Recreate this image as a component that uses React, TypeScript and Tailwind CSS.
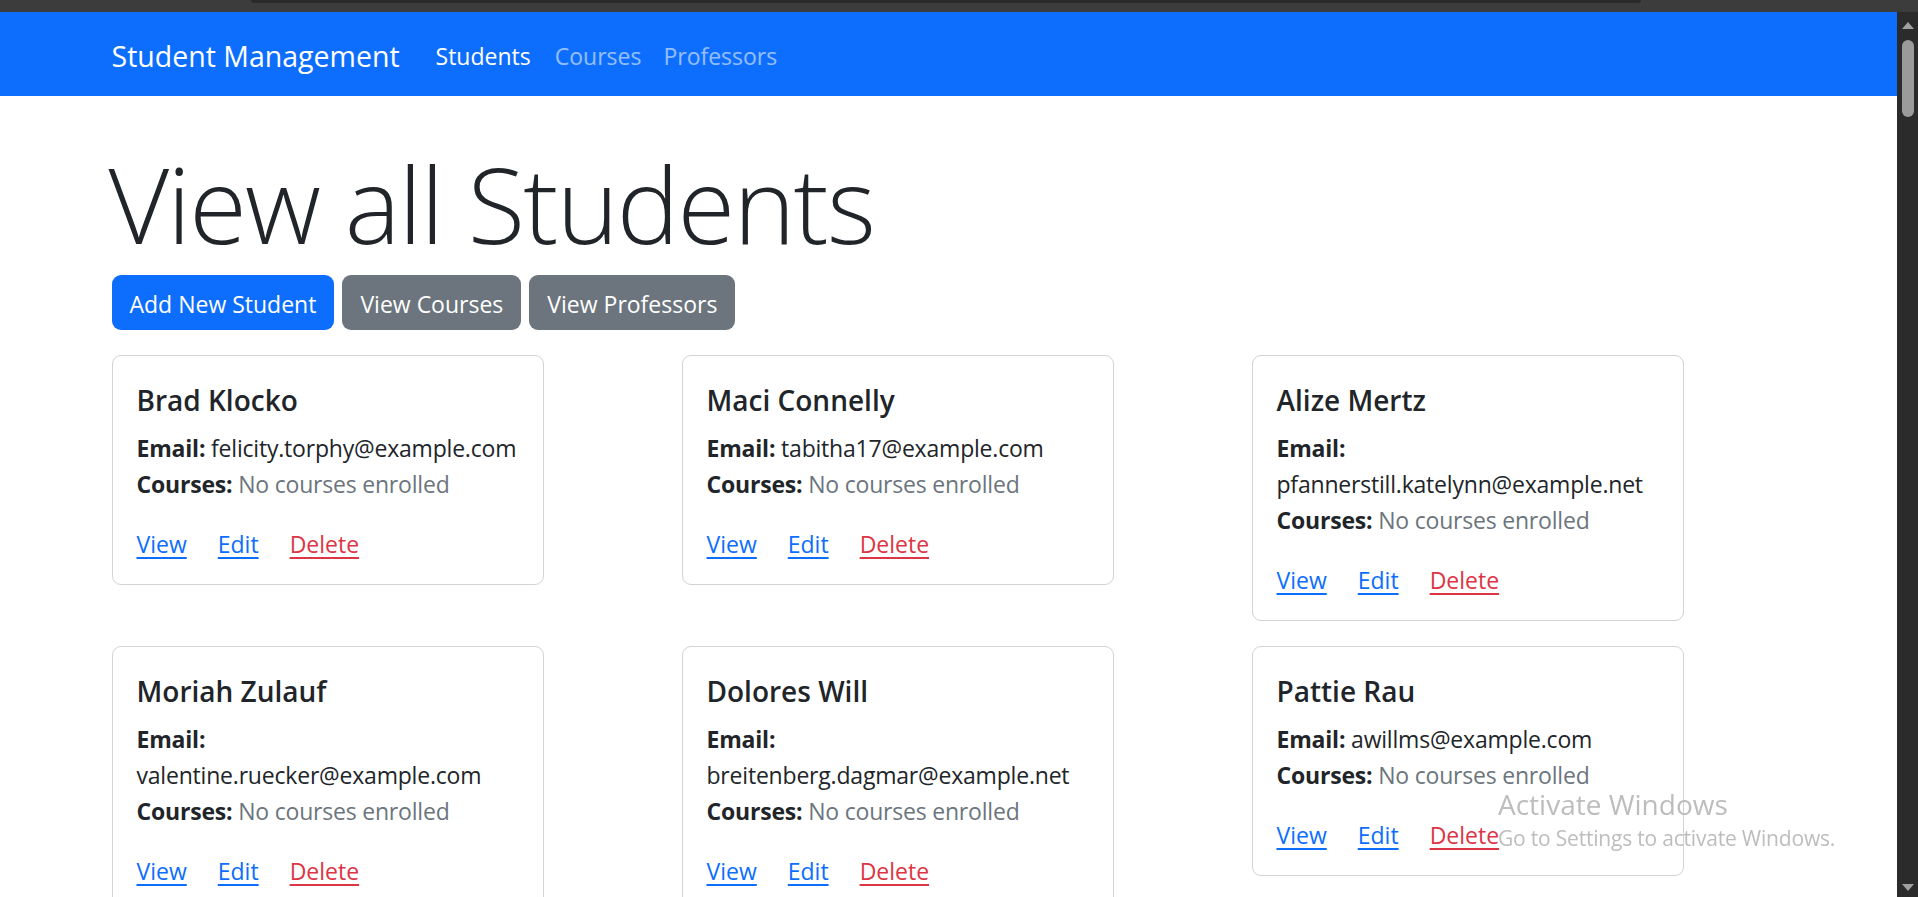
import React from 'react';

interface Student {
    id: number;
    name: string;
    email: string;
}

const students: Student[] = [
    { id: 1, name: 'Brad Klocko', email: 'felicity.torphy@example.com' },
    { id: 2, name: 'Maci Connelly', email: 'tabitha17@example.com' },
    { id: 3, name: 'Alize Mertz', email: 'pfannerstill.katelynn@example.net' },
    { id: 4, name: 'Moriah Zulauf', email: 'valentine.ruecker@example.com' },
    { id: 5, name: 'Dolores Will', email: 'breitenberg.dagmar@example.net' },
    { id: 6, name: 'Pattie Rau', email: 'awillms@example.com' },
];

const StudentCard: React.FC<{ student: Student }> = ({ student }) => (
    <div className="w-[432px] bg-white border border-[#d3d3d3] rounded-[9px]">
        <div className="px-[24px] pt-[26px] pb-[22px]">
            <h5 className="text-[28px] leading-[36px] font-semibold text-[#212529] mb-[12px]">{student.name}</h5>
            <p className="text-[23px] leading-[36px] tracking-[-0.2px] text-[#212529] mb-[24px]">
                <strong className="font-bold">Email:</strong> {student.email}
                <br />
                <strong className="font-bold">Courses:</strong> <span className="text-[#6c757d]">No courses enrolled</span>
            </p>
            <div className="flex gap-[31px] text-[23px] leading-[36px]">
                <a href="#" className="text-[#0d6efd] underline underline-offset-[4px]">View</a>
                <a href="#" className="text-[#0d6efd] underline underline-offset-[4px]">Edit</a>
                <a href="#" className="text-[#dc3545] underline underline-offset-[4px]">Delete</a>
            </div>
        </div>
    </div>
);

const App: React.FC = () => {
    return (
        <div className="h-screen w-full flex flex-col bg-[#3c3c3c] overflow-hidden font-['Open_Sans',sans-serif]">
            {/* window chrome strip */}
            <div className="h-[12px] shrink-0 flex">
                <div className="ml-[251px] w-[1390px] h-[3px] bg-[#2a2a2a] rounded-b-[3px]" />
            </div>

            <div className="flex-1 flex min-h-0">
                <main className="flex-1 bg-white overflow-hidden">
                    <nav className="h-[84px] bg-[#0d6efd]">
                        <div className="mx-auto w-[1710px] px-[18px] pt-[4px] h-full flex items-center">
                            <a href="#" className="text-[28.5px] text-white mr-[24px]">Student Management</a>
                            <ul className="flex text-[23px]">
                                <li><a href="#" className="px-[12px] text-white">Students</a></li>
                                <li><a href="#" className="px-[12px] text-white/55">Courses</a></li>
                                <li><a href="#" className="pl-[10px] pr-[12px] text-white/55">Professors</a></li>
                            </ul>
                        </div>
                    </nav>

                    <div className="mx-auto w-[1710px] px-[18px]">
                        <h1 className="mt-[45px] mb-[8px] text-[105px] leading-[126px] tracking-[-1.8px] font-light text-[#212529] -ml-[3px]">
                            View all Students
                        </h1>
                        <div className="flex gap-[8px] text-[23px]">
                            <button className="h-[55px] px-[18px] pt-[3px] rounded-[9px] bg-[#0d6efd] text-white">Add New Student</button>
                            <button className="h-[55px] px-[18px] pt-[3px] rounded-[9px] bg-[#6c757d] text-white">View Courses</button>
                            <button className="h-[55px] px-[18px] pt-[3px] rounded-[9px] bg-[#6c757d] text-white">View Professors</button>
                        </div>

                        <div className="mt-[25px] grid grid-cols-3 gap-x-[36px] gap-y-[25px] items-start">
                            {students.map((s) => (
                                <StudentCard key={s.id} student={s} />
                            ))}
                        </div>
                    </div>
                </main>

                {/* scrollbar */}
                <div className="w-[21px] shrink-0 bg-[#2b2b2b] flex flex-col items-center">
                    <div className="mt-[10px] w-0 h-0 border-l-[6px] border-r-[6px] border-b-[7px] border-l-transparent border-r-transparent border-b-[#a0a0a0]" />
                    <div className="mt-[11px] w-[12px] h-[77px] rounded-full bg-[#9b9b9b]" />
                    <div className="flex-1" />
                    <div className="mb-[6px] w-0 h-0 border-l-[6px] border-r-[6px] border-t-[7px] border-l-transparent border-r-transparent border-t-[#a0a0a0]" />
                </div>
            </div>

            {/* Windows activation watermark */}
            <div className="fixed left-[1498px] top-[786px] pointer-events-none text-[#bdbdbd] font-['Open_Sans',sans-serif]">
                <div className="text-[28px] leading-[36px]">Activate Windows</div>
                <div className="text-[21px] leading-[28px] mt-[2px] tracking-[-0.2px]">Go to Settings to activate Windows.</div>
            </div>
        </div>
    );
};

export default App;
